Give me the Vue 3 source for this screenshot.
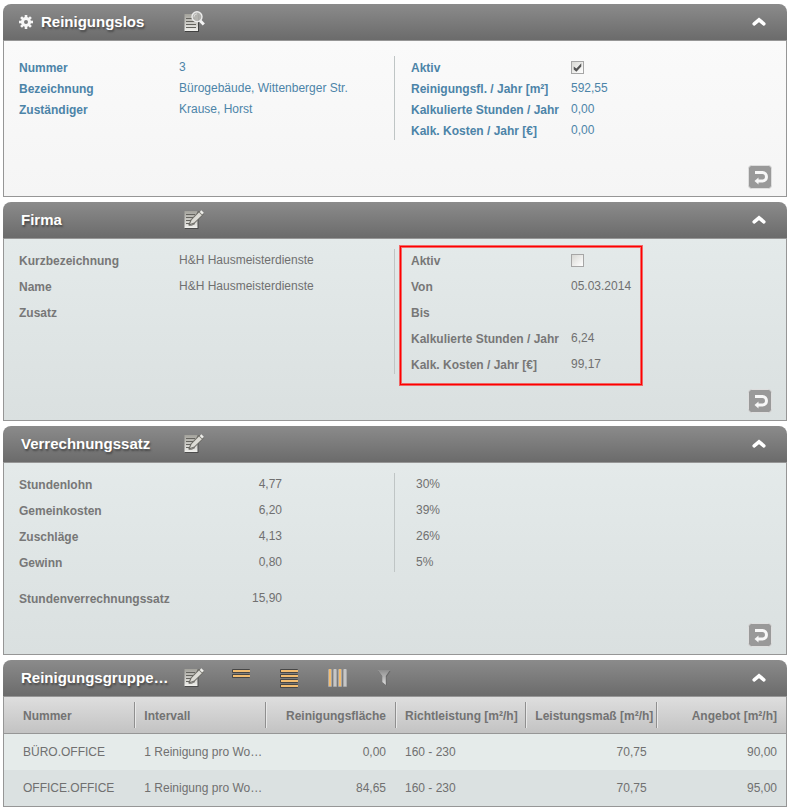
<script setup>
import { ref } from 'vue'

const lotOpen = ref(true)
const companyOpen = ref(true)
const rateOpen = ref(true)
const groupOpen = ref(true)

const lotActive = ref(true)
const companyActive = ref(false)

const lotLeft = [
  { label: 'Nummer', value: '3' },
  { label: 'Bezeichnung', value: 'Bürogebäude, Wittenberger Str.' },
  { label: 'Zuständiger', value: 'Krause, Horst' },
]
const lotRight = [
  { label: 'Reinigungsfl. / Jahr [m²]', value: '592,55' },
  { label: 'Kalkulierte Stunden / Jahr', value: '0,00' },
  { label: 'Kalk. Kosten / Jahr [€]', value: '0,00' },
]
const companyLeft = [
  { label: 'Kurzbezeichnung', value: 'H&H Hausmeisterdienste' },
  { label: 'Name', value: 'H&H Hausmeisterdienste' },
  { label: 'Zusatz', value: '' },
]
const companyRight = [
  { label: 'Von', value: '05.03.2014' },
  { label: 'Bis', value: '' },
  { label: 'Kalkulierte Stunden / Jahr', value: '6,24' },
  { label: 'Kalk. Kosten / Jahr [€]', value: '99,17' },
]
const rates = [
  { label: 'Stundenlohn', value: '4,77', share: '30%' },
  { label: 'Gemeinkosten', value: '6,20', share: '39%' },
  { label: 'Zuschläge', value: '4,13', share: '26%' },
  { label: 'Gewinn', value: '0,80', share: '5%' },
]
const columns = [
  { label: 'Nummer', num: false },
  { label: 'Intervall', num: false },
  { label: 'Reinigungsfläche', num: true },
  { label: 'Richtleistung [m²/h]', num: false },
  { label: 'Leistungsmaß [m²/h]', num: true },
  { label: 'Angebot [m²/h]', num: true },
]
const groups = [
  ['BÜRO.OFFICE', '1 Reinigung pro Wo…', '0,00', '160 - 230', '70,75', '90,00'],
  ['OFFICE.OFFICE', '1 Reinigung pro Wo…', '84,65', '160 - 230', '70,75', '95,00'],
]
const teeth = [0, 45, 90, 135, 180, 225, 270, 315]
</script>

<template>
  <svg class="defs" width="0" height="0" aria-hidden="true">
    <defs>
      <linearGradient id="page" x1="0" y1="0" x2="0" y2="1">
        <stop offset="0" stop-color="#a3a29b" />
        <stop offset="0.5" stop-color="#c9c8c3" />
        <stop offset="1" stop-color="#f1f1ee" />
      </linearGradient>
      <linearGradient id="funnel" x1="0" y1="0" x2="0" y2="1">
        <stop offset="0" stop-color="#8e8e8e" />
        <stop offset="1" stop-color="#dedede" />
      </linearGradient>
      <symbol id="edit" viewBox="0 0 20 20">
        <path d="M1 1.500h13.500v17.500H1z" fill="#3f3f3f" opacity=".75" />
        <path d="M.5 1h13v17H.5z" fill="url(#page)" />
        <path d="M2 4.500h9M2 7.500h7M2 10.500h5M2 13.500h3" stroke="#65645f" stroke-width="1.200" />
        <path d="M5 14.800 7 9.800 15.500 1l3.500 3.500L10.500 13z" fill="#77766f" stroke="#696862" />
        <path d="M6 14 7.700 10 15 2.500 17.800 5.200 10.200 12.600z" fill="#dddcd6" />
        <path d="M15.700 2 17.300.3l2.500 2.500-1.700 1.700z" fill="#eeeeea" />
        <path d="M4.500 15c2.500.8 4.500-.2 6.500-1.500" fill="none" stroke="#65645f" />
      </symbol>
      <symbol id="chevron" viewBox="0 0 14 10">
        <path d="M2 8 7 4l5 4" fill="none" stroke="#555" stroke-width="3" opacity=".5" />
        <path d="M2.200 6.800 7 2.800l4.800 4" fill="none" stroke="#fff" stroke-width="3.600" stroke-linecap="round" />
      </symbol>
      <symbol id="back" viewBox="0 0 24 24">
        <rect x=".5" y=".5" width="23" height="23" rx="3" fill="#999" stroke="#dedede" />
        <path d="M7 7.500h7.500a3.900 3.900 0 0 1 3.900 4.200 3.900 3.900 0 0 1-3.900 4.300H10" fill="none" stroke="#f7f7f7" stroke-width="3" />
        <path d="M6.500 16l4-3.500v7z" fill="#f7f7f7" />
      </symbol>
    </defs>
  </svg>

  <main class="page">
    <section class="panel lot">
      <header class="bar">
        <h2 class="title">
          <svg class="gear" viewBox="0 0 14 14" aria-hidden="true">
            <rect v-for="a in teeth" :key="a" x="5.700" y="0" width="2.600" height="4" fill="#f6f6f6" :transform="`rotate(${a} 7 7)`" />
            <circle cx="7" cy="7" r="3.500" fill="none" stroke="#f6f6f6" stroke-width="3" />
          </svg>
          Reinigungslos
        </h2>
        <div class="tools">
          <button type="button" class="tool" aria-label="Anzeigen">
            <svg width="21" height="22" viewBox="0 0 21 22">
              <path d="M1 4h14v17H1z" fill="#353535" opacity=".8" />
              <path d="M.5 3H14v17H.5z" fill="url(#page)" />
              <path d="M2 7.500h9M2 10.500h10M2 13.500h10M2 16.500h10" stroke="#65645f" />
              <path d="m16 9.500 3.800 4" stroke="#f4f4f4" stroke-width="3" />
              <circle cx="13" cy="5.800" r="5" fill="#b4b4b0" fill-opacity=".9" stroke="#ececec" stroke-width="1.400" />
              <path d="M10 5.800a3 3 0 0 1 3-3" stroke="#ddd" fill="none" />
            </svg>
          </button>
        </div>
        <button type="button" class="toggle" aria-label="Reinigungslos ein- oder ausklappen" @click="lotOpen = !lotOpen">
          <svg width="14" height="10"><use href="#chevron" /></svg>
        </button>
      </header>
      <div v-if="lotOpen" class="body">
        <div class="cols">
          <div class="col">
            <div v-for="r in lotLeft" :key="r.label" class="row">
              <span class="label">{{ r.label }}</span><span class="value">{{ r.value }}</span>
            </div>
          </div>
          <div class="col">
            <div class="row">
              <label class="label" for="lot-active">Aktiv</label>
              <input id="lot-active" v-model="lotActive" class="check" type="checkbox">
            </div>
            <div v-for="r in lotRight" :key="r.label" class="row">
              <span class="label">{{ r.label }}</span><span class="value">{{ r.value }}</span>
            </div>
          </div>
        </div>
        <footer class="foot">
          <button type="button" class="back" aria-label="Zurück"><svg width="24" height="24"><use href="#back" /></svg></button>
        </footer>
      </div>
    </section>

    <section class="panel">
      <header class="bar">
        <h2 class="title">Firma</h2>
        <div class="tools">
          <button type="button" class="tool" aria-label="Firma bearbeiten"><svg width="20" height="20"><use href="#edit" /></svg></button>
        </div>
        <button type="button" class="toggle" aria-label="Firma ein- oder ausklappen" @click="companyOpen = !companyOpen">
          <svg width="14" height="10"><use href="#chevron" /></svg>
        </button>
      </header>
      <div v-if="companyOpen" class="body">
        <div class="cols">
          <div class="col">
            <div v-for="r in companyLeft" :key="r.label" class="row">
              <span class="label">{{ r.label }}</span><span class="value">{{ r.value }}</span>
            </div>
          </div>
          <div class="col marked">
            <div class="row">
              <label class="label" for="company-active">Aktiv</label>
              <input id="company-active" v-model="companyActive" class="check" type="checkbox">
            </div>
            <div v-for="r in companyRight" :key="r.label" class="row">
              <span class="label">{{ r.label }}</span><span class="value">{{ r.value }}</span>
            </div>
          </div>
        </div>
        <footer class="foot">
          <button type="button" class="back" aria-label="Zurück"><svg width="24" height="24"><use href="#back" /></svg></button>
        </footer>
      </div>
    </section>

    <section class="panel rate">
      <header class="bar">
        <h2 class="title">Verrechnungssatz</h2>
        <div class="tools">
          <button type="button" class="tool" aria-label="Verrechnungssatz bearbeiten"><svg width="20" height="20"><use href="#edit" /></svg></button>
        </div>
        <button type="button" class="toggle" aria-label="Verrechnungssatz ein- oder ausklappen" @click="rateOpen = !rateOpen">
          <svg width="14" height="10"><use href="#chevron" /></svg>
        </button>
      </header>
      <div v-if="rateOpen" class="body">
        <div class="cols">
          <div class="col">
            <div v-for="r in rates" :key="r.label" class="row">
              <span class="label">{{ r.label }}</span><span class="value">{{ r.value }}</span>
            </div>
          </div>
          <div class="col shares">
            <span v-for="r in rates" :key="r.label" class="value">{{ r.share }}</span>
          </div>
        </div>
        <div class="row total">
          <span class="label">Stundenverrechnungssatz</span><span class="value">15,90</span>
        </div>
        <footer class="foot">
          <button type="button" class="back" aria-label="Zurück"><svg width="24" height="24"><use href="#back" /></svg></button>
        </footer>
      </div>
    </section>

    <section class="panel">
      <header class="bar">
        <h2 class="title">Reinigungsgruppe…</h2>
        <div class="tools">
          <button type="button" class="tool" aria-label="Reinigungsgruppen bearbeiten"><svg width="20" height="20"><use href="#edit" /></svg></button>
          <button type="button" class="tool" aria-label="Wenige Zeilen">
            <svg width="20" height="20" viewBox="0 0 20 20">
              <g v-for="y in [1, 6]" :key="y">
                <rect x="0" :y="y" width="18" height="4" rx="1" fill="#464646" />
                <rect x="1" :y="y + 1" width="17" height="2" fill="#f3bd70" />
              </g>
            </svg>
          </button>
          <button type="button" class="tool" aria-label="Viele Zeilen">
            <svg width="20" height="20" viewBox="0 0 20 20">
              <g v-for="y in [1, 6, 11, 16]" :key="y">
                <rect x="0" :y="y" width="18" height="4" rx="1" fill="#464646" />
                <rect x="1" :y="y + 1" width="17" height="2" fill="#f3bd70" />
              </g>
            </svg>
          </button>
          <button type="button" class="tool" aria-label="Spalten">
            <svg width="20" height="20" viewBox="0 0 20 20">
              <g v-for="(x, i) in [0, 5, 10, 15]" :key="x">
                <rect :x="x" y="1" width="4" height="18" rx="1" fill="#a9a9a9" />
                <rect :x="x + 1" y="1" width="2" height="17" :fill="i % 2 ? '#c6c6c6' : '#f3bd70'" />
              </g>
            </svg>
          </button>
          <button type="button" class="tool" aria-label="Filter">
            <svg width="20" height="20" viewBox="0 0 20 20">
              <path d="M2 3h12.500L10.500 9v8.500L7 15V9z" fill="#555" opacity=".6" />
              <path d="M1.500 2H14L9.800 8v9L6.300 14V8z" fill="url(#funnel)" />
            </svg>
          </button>
        </div>
        <button type="button" class="toggle" aria-label="Reinigungsgruppen ein- oder ausklappen" @click="groupOpen = !groupOpen">
          <svg width="14" height="10"><use href="#chevron" /></svg>
        </button>
      </header>
      <div v-if="groupOpen" class="grid">
        <table>
          <thead>
            <tr><th v-for="c in columns" :key="c.label" scope="col" :class="{ num: c.num }">{{ c.label }}</th></tr>
          </thead>
          <tbody>
            <tr v-for="g in groups" :key="g[0]">
              <td v-for="(v, i) in g" :key="i" :class="{ num: columns[i].num }">{{ v }}</td>
            </tr>
          </tbody>
        </table>
      </div>
    </section>
  </main>
</template>

<style>
body {
  background: #fff;
}
</style>

<style scoped>
.defs {
  position: absolute;
}
.page {
  display: flex;
  flex-direction: column;
  gap: 5px;
  padding: 4px 5px 4px 3px;
  font-family: "Liberation Sans", Arial, sans-serif;
  font-size: 12px;
  color: #707070;
}
.bar {
  display: flex;
  align-items: center;
  height: 36px;
  padding: 0 16px 0 18px;
  border-radius: 8px 8px 0 0;
  background: linear-gradient(#8b8b8b, #6b6b6b);
}
.title {
  display: flex;
  align-items: center;
  gap: 8px;
  width: 163px;
  margin: 0;
  font-size: 15px;
  line-height: 36px;
  color: #fff;
  white-space: nowrap;
  text-shadow: 1px 2px 2px #484848;
}
.gear {
  width: 14px;
  height: 14px;
  margin-left: -2px;
}
.tools {
  display: flex;
  gap: 28px;
  flex: 1;
}
button {
  padding: 0;
  border: 0;
  background: none;
  cursor: pointer;
}
.tool,
.toggle,
.back {
  display: flex;
  align-items: center;
  justify-content: center;
}
.tool {
  width: 20px;
  height: 22px;
}
.tool svg,
.back svg {
  flex: none;
}
.toggle {
  width: 24px;
  height: 24px;
}
.body {
  padding-top: 10px;
  border: 1px solid #969696;
  background: linear-gradient(#e4eaea, #dae0e0);
}
.cols {
  display: grid;
  grid-template-columns: 1fr 1fr;
}
.col {
  display: flex;
  flex-direction: column;
  gap: 5px;
  padding-left: 16px;
}
.col:first-child {
  padding-left: 15px;
  border-right: 1px solid #bfc5c5;
}
.row {
  display: grid;
  grid-template-columns: 160px 1fr;
  height: 21px;
}
.label {
  padding-top: 1px;
  font-weight: bold;
  line-height: 23px;
  color: #777;
  white-space: nowrap;
}
.value {
  height: 21px;
  line-height: 23px;
  white-space: nowrap;
}
.check {
  appearance: none;
  width: 13px;
  height: 13px;
  margin: 5px 0 0;
  border: 1px solid #a6a6a6;
  background: linear-gradient(135deg, #d8d8d4, #fff);
}
.check:checked::before {
  content: "";
  display: block;
  width: 9px;
  height: 9px;
  margin: 1px;
  background: #555;
  clip-path: polygon(8% 38%, 38% 62%, 92% 4%, 92% 38%, 38% 96%, 8% 72%);
}
.foot {
  display: flex;
  justify-content: flex-end;
  padding: 15px 14px 7px;
}
.lot .body {
  padding-top: 15px;
  background: linear-gradient(#fafafa, #f5f5f5);
}
.lot .col {
  gap: 0;
}
.lot .label,
.lot .value {
  color: #4c84a8;
}
.lot .foot {
  padding-top: 25px;
}
.marked {
  position: relative;
}
.marked::after {
  content: "";
  position: absolute;
  top: -3px;
  left: 5px;
  width: 240px;
  height: 137px;
  border: 1px solid #f00;
  outline: 1px solid rgba(255, 0, 0, 0.55);
  box-shadow: inset 0 0 0 1px rgba(255, 0, 0, 0.55);
  pointer-events: none;
}
.rate .row {
  grid-template-columns: 160px 103px;
}
.rate .row .value {
  text-align: right;
}
.shares {
  padding-left: 21px;
}
.total {
  margin-top: 15px;
  padding-left: 15px;
}
.grid {
  border: 1px solid #969696;
}
table {
  width: 100%;
  table-layout: fixed;
  border-collapse: separate;
  border-spacing: 0;
}
th,
td {
  height: 36px;
  padding: 0 9px 0 10px;
  text-align: left;
  white-space: nowrap;
}
th:first-child,
td:first-child {
  padding-left: 19px;
}
thead tr {
  background: linear-gradient(#dedede, #c2c2c2);
}
th {
  height: 34px;
  padding-top: 2px;
  border-bottom: 1px solid #969696;
  color: #737373;
}
th:not(:first-child) {
  background: linear-gradient(90deg, #8f8f8f 50%, #e8e8e8 50%) no-repeat left 5px / 2px 26px;
}
.num {
  text-align: right;
}
tbody tr {
  background: #e5ebea;
}
tbody tr:nth-child(even) {
  background: #dbe1e1;
}
</style>
